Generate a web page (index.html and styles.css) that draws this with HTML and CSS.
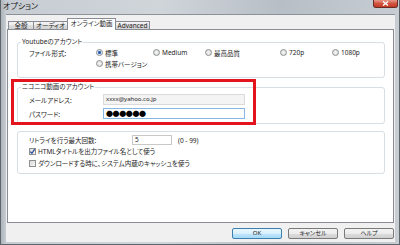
FILE: index.html
```html
<!DOCTYPE html>
<html>
<head>
    <meta charset="utf-8">
    <title>オプション</title>
    <link rel="stylesheet" href="styles.css">
</head>
<body>

    <div class="window">
        <div class="titlebar">
            <span class="title">オプション</span>
            <div class="close">
                <svg width="7" height="5" viewBox="0 0 7 5"><path d="M1 0.5 L6 4.5 M6 0.5 L1 4.5" stroke="#ffffff" stroke-width="1.4"/></svg>
            </div>
        </div>

        <div class="client">
            <div class="tabs">
                <div class="tab tab-general">全般</div>
                <div class="tab tab-audio">オーディオ</div>
                <div class="tab tab-online active">オンライン動画</div>
                <div class="tab tab-advanced">Advanced</div>
            </div>

            <div class="panel">
                <fieldset class="group group-youtube">
                    <legend>Youtubeのアカウント</legend>
                    <div class="format-grid">
                        <span>ファイル形式:</span>
                        <label class="option"><span class="radio checked"></span>標準</label>
                        <label class="option"><span class="radio"></span>Medium</label>
                        <label class="option"><span class="radio"></span>最高品質</label>
                        <label class="option"><span class="radio"></span>720p</label>
                        <label class="option"><span class="radio"></span>1080p</label>
                        <span></span>
                        <label class="option mobile"><span class="radio"></span>携帯バージョン</label>
                    </div>
                </fieldset>

                <fieldset class="group group-nico">
                    <legend>ニコニコ動画のアカウント</legend>
                    <div class="account-grid">
                        <span>メールアドレス:</span>
                        <div class="field field-mail">xxxx@yahoo.co.jp</div>
                        <span>パスワード:</span>
                        <div class="field field-pass">●●●●●●</div>
                    </div>
                </fieldset>

                <fieldset class="group group-misc">
                    <div class="retry-row">
                        <span class="retry-label">リトライを行う最大回数:</span>
                        <div class="field field-retry">5</div>
                        <span class="range">(0 - 99)</span>
                    </div>
                    <label class="check-row"><span class="check checked">
                        <svg width="7" height="7" viewBox="0 0 7 7"><path d="M1.3 3.6 L2.9 5.3 L5.8 1.2" stroke="#2a4f9a" stroke-width="1.3" fill="none"/></svg>
                    </span>HTMLタイトルを出力ファイル名として使う</label>
                    <label class="check-row"><span class="check"></span>ダウンロードする時に、システム内蔵のキャッシュを使う</label>
                </fieldset>

                <!-- 赤枠 (注釈) -->
                <div class="highlight"></div>
            </div>

            <div class="buttons">
                <button class="btn btn-ok">OK</button>
                <button class="btn">キャンセル</button>
                <button class="btn">ヘルプ</button>
            </div>
        </div>
    </div>

</body>
</html>
```

FILE: styles.css
```css
body {
    margin: 0;
    padding: 0;
    font-family: "Noto Sans", "Noto Sans CJK JP", sans-serif;
    font-size: 6.5px;
    font-feature-settings: "palt";
    color: #1e1e1e;
    background-color: #ffffff;
}

.window {
    width: 400px;
    height: 245px;
    display: flex;
    flex-direction: column;
    background: linear-gradient(to right, #a9b0b6 0px, #c6ccd2 6px, #d0d5da 40%, #b7bec5 70%, #c7cdd3 100%);
    box-shadow: inset 1px 0 #5e656b, inset -1px 0 #5e656b, inset 0 -1px #5e656b;
}

.titlebar {
    height: 14px;
    display: flex;
    align-items: flex-start;
    padding-left: 3px;
}

.title {
    font-size: 8px;
    line-height: 12px;
    color: #1a1a1a;
}

.close {
    margin-left: auto;
    margin-right: 2px;
    width: 25px;
    height: 8px;
    box-sizing: border-box;
    border: 1px solid #6a2b22;
    border-top: none;
    border-radius: 0 0 3px 3px;
    background: linear-gradient(#e59a8a, #d2533f 50%, #c23a24);
    display: flex;
    justify-content: center;
    align-items: center;
}

.client {
    flex: 1;
    margin: 0 5px 3px 6px;
    border-top: 1px solid #8b9298;
    background-color: #f0f0f0;
    padding: 0 1px;
    display: flex;
    flex-direction: column;
}

.tabs {
    height: 14px;
    display: flex;
    align-items: flex-end;
    padding-left: 1px;
}

.tab {
    height: 8px;
    box-sizing: border-box;
    border: 1px solid #898c95;
    border-bottom: none;
    margin-right: -1px;
    background: linear-gradient(#f4f4f4, #ebebeb 50%, #dedede 50%, #d2d2d2);
    text-align: center;
    line-height: 7px;
    white-space: nowrap;
}

.tab-general { width: 26px; }
.tab-audio { width: 35px; }
.tab-online { width: 49px; }
.tab-advanced { width: 35px; }

.tab.active {
    height: 12px;
    margin-bottom: -1px;
    background: #ffffff;
    position: relative;
    z-index: 1;
    line-height: 9px;
}

.panel {
    height: 194px;
    box-sizing: border-box;
    border: 1px solid #898c95;
    background-color: #ffffff;
    padding: 8px 8px 0 9px;
    position: relative;
}

.group {
    margin: 0;
    min-width: 0;
    border: 1px solid #d5dfe5;
    border-radius: 3px;
    padding: 0 0 0 3px;
}

.group legend {
    padding: 0 1px;
    line-height: 8px;
}

.group-youtube {
    padding-top: 1px;
    padding-bottom: 8px;
}

.format-grid {
    margin-left: 8px;
    display: grid;
    grid-template-columns: 67px 57px 52px 75px 52px auto;
    grid-auto-rows: 11px;
    align-items: center;
}

.option {
    display: flex;
    align-items: center;
    gap: 2px;
    white-space: nowrap;
}

.option.mobile {
    grid-column: 2 / span 3;
}

.radio {
    width: 7px;
    height: 7px;
    box-sizing: border-box;
    border: 1px solid #8d8f91;
    border-radius: 50%;
    background: radial-gradient(circle, #f4f4f4 0, #d9d9d9 100%);
}

.radio.checked {
    background: radial-gradient(circle, #244f9e 0, #3a6fc0 1.3px, #dfe7f0 2px);
}

.group-nico {
    margin-top: 5px;
    padding-top: 3px;
    padding-bottom: 4px;
}

.account-grid {
    margin-left: 8px;
    display: grid;
    grid-template-columns: 74px 142px;
    grid-auto-rows: 11px;
    row-gap: 3px;
    align-items: center;
}

.field {
    height: 11px;
    box-sizing: border-box;
    border: 1px solid #d2d2d2;
    background-color: #ffffff;
    padding: 0 2px;
    line-height: 9px;
    white-space: nowrap;
    overflow: hidden;
}

.field-mail {
    background-color: #f4f4f4;
    border-color: #dadada;
    font-size: 6px;
}

.field-pass {
    border-color: #86b6e6;
    font-size: 7px;
    letter-spacing: -0.4px;
    color: #000000;
}

.group-misc {
    margin-top: 7px;
    padding: 3px 0 4px 11px;
}

.retry-row {
    height: 10px;
    display: flex;
    align-items: center;
}

.retry-label {
    width: 103px;
}

.field-retry {
    width: 40px;
    height: 10px;
    line-height: 8px;
    border-color: #c8c8c8;
}

.range {
    margin-left: 6px;
}

.check-row {
    height: 12px;
    display: flex;
    align-items: center;
    gap: 2px;
    white-space: nowrap;
}

.check {
    width: 7px;
    height: 7px;
    box-sizing: border-box;
    border: 1px solid #8e8f8f;
    background: linear-gradient(135deg, #dcdcdc, #f6f6f6);
    display: flex;
    justify-content: center;
    align-items: center;
}

.check svg {
    flex: none;
}

.highlight {
    position: absolute;
    left: 3px;
    top: 49px;
    width: 245px;
    height: 46px;
    box-sizing: border-box;
    border: 3px solid #e3141d;
}

.buttons {
    margin-top: 5px;
    display: flex;
    justify-content: flex-end;
    gap: 6px;
}

.btn {
    width: 50px;
    height: 11px;
    padding: 0;
    box-sizing: border-box;
    border: 1px solid #7a7a7a;
    border-radius: 2px;
    background: linear-gradient(#f3f3f3, #ececec 50%, #dddddd 50%, #d0d0d0);
    font-family: "Noto Sans", "Noto Sans CJK JP", sans-serif;
    font-size: 6px;
    font-feature-settings: "palt";
    line-height: 9px;
    color: #222222;
}

.btn-ok {
    border-color: #3c7fb1;
    background: linear-gradient(#eaf6fd, #d9f0fc 50%, #bee6fd 50%, #a7d9f5);
}
```
